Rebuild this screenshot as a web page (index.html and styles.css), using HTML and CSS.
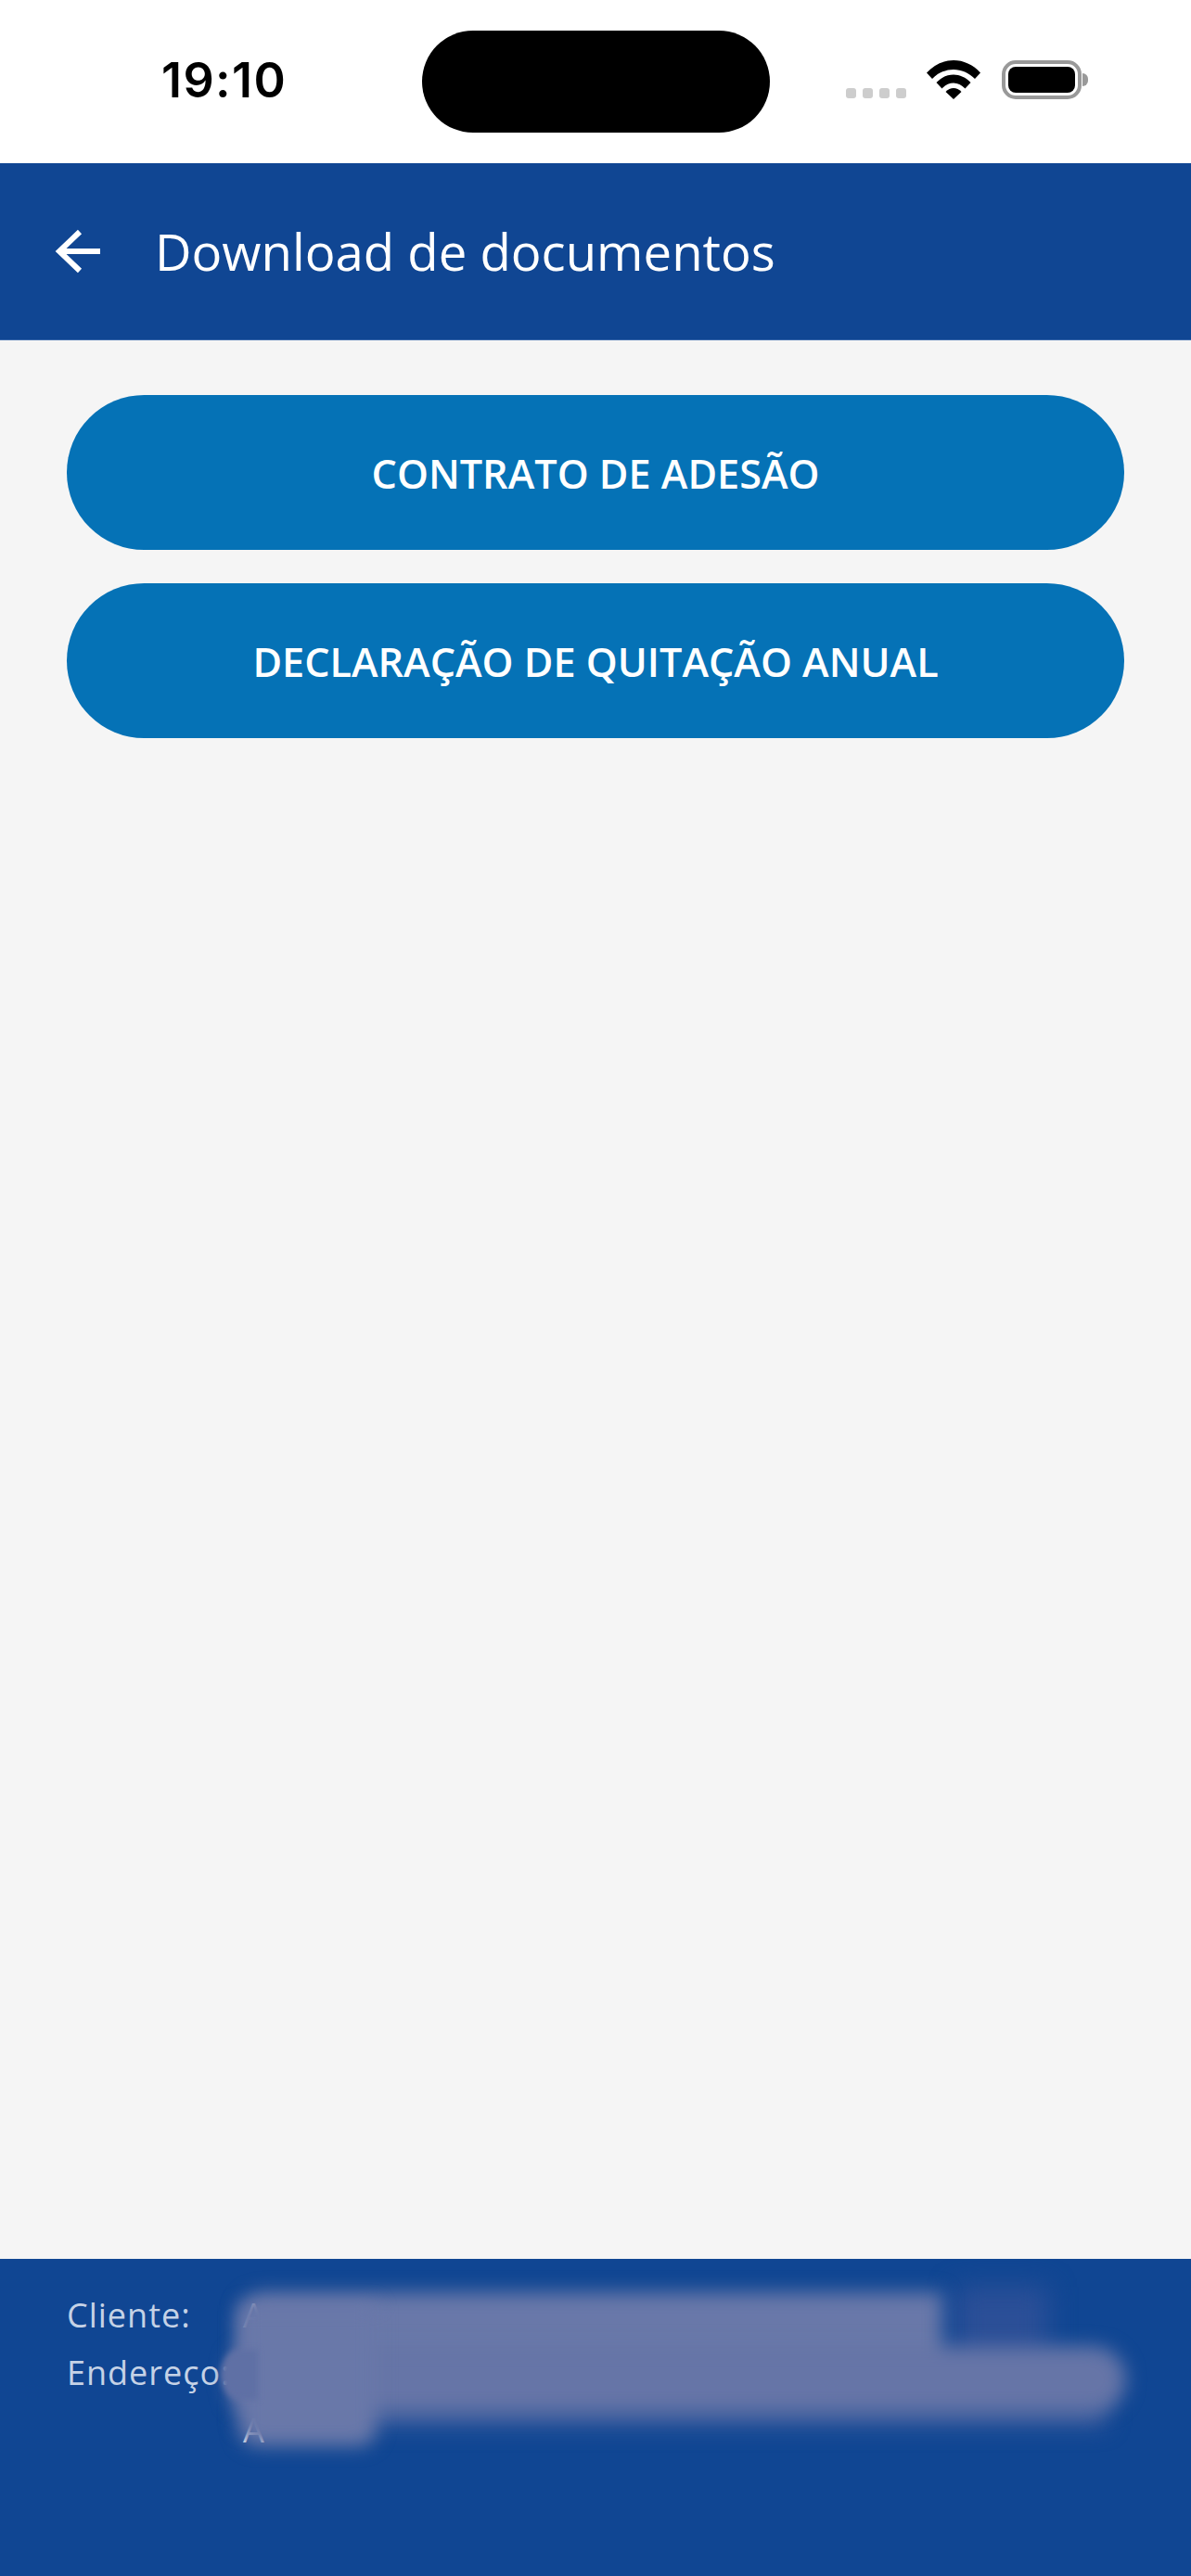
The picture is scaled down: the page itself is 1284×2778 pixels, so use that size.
FILE: index.html
```html
<!DOCTYPE html>
<html lang="pt-BR">
<head>
  <meta charset="UTF-8">
  <meta name="viewport" content="width=device-width, initial-scale=1.0">
  <title>Download de documentos</title>
  <link rel="stylesheet" href="styles.css">
</head>
<body>

  <div class="status-bar">
    <span class="clock">19:10</span>
    <div class="island"></div>
    <div class="status-icons">
      <div class="signal"><i></i><i></i><i></i><i></i></div>
      <svg class="wifi" width="58" height="42" viewBox="0 0 58 42">
        <path d="M0 13.500C16-4.500 42-4.500 58 13.500L52 20C39 6.500 19 6.500 6 20Z" fill="#000"/>
        <path d="M10.500 24C21 12.500 37 12.500 47.500 24L41.500 30.500C34 22.500 24 22.500 16.500 30.500Z" fill="#000"/>
        <path d="M20.500 34C25.500 28.500 32.500 28.500 37.500 34L29 42Z" fill="#000"/>
      </svg>
      <div class="battery"><div class="battery-fill"></div></div>
      <div class="battery-cap"></div>
    </div>
  </div>

  <header class="app-header">
    <svg class="back-icon" width="50" height="48" viewBox="0 0 50 48">
      <path d="M27 3L5 24L27 45M5 24H49" fill="none" stroke="#fff" stroke-width="6"/>
    </svg>
    <h1>Download de documentos</h1>
  </header>

  <main class="content">
    <button type="button" class="doc-button">CONTRATO DE ADESÃO</button>
    <button type="button" class="doc-button">DECLARAÇÃO DE QUITAÇÃO ANUAL</button>
  </main>

  <footer class="client-info">
    <div class="info-grid">
      <span class="info-label">Cliente:</span><span class="info-value">A</span>
      <span class="info-label">Endereço:</span><span class="info-value"></span>
      <span class="info-label"></span><span class="info-value">A</span>
    </div>
    <div class="redaction">
      <div class="smear smear-corner"></div>
      <div class="smear smear-top"></div>
      <div class="smear smear-shadow"></div>
      <div class="smear smear-middle"></div>
      <div class="smear smear-left"></div>
      <div class="smear smear-tip"></div>
    </div>
  </footer>

</body>
</html>
```

FILE: styles.css
```css
* {
  box-sizing: border-box;
}
html, body {
  height: 100%;
}
body {
  display: flex;
  flex-direction: column;
  margin: 0;
  font-family: "Open Sans", Arial, sans-serif;
  background: #f5f5f5;
  overflow: hidden;
}
.status-bar {
  position: relative;
  height: 176px;
  flex: none;
  background: #fff;
}
.clock {
  position: absolute;
  left: 174px;
  top: 56px;
  font-family: Inter, "Liberation Sans", sans-serif;
  font-size: 52px;
  line-height: 62px;
  font-weight: 600;
  letter-spacing: 1.400px;
  color: #000;
}
.island {
  position: absolute;
  left: 455px;
  top: 33px;
  width: 375px;
  height: 110px;
  background: #000;
  border-radius: 55px;
}
.status-icons {
  position: absolute;
  left: 912px;
  top: 64px;
  display: flex;
  align-items: flex-start;
}
.signal {
  display: flex;
  gap: 7px;
  margin-top: 31px;
}
.signal i {
  width: 11px;
  height: 11px;
  background: #cdcdcd;
  border-radius: 3px;
}
.wifi {
  margin-left: 22px;
  margin-top: 1px;
}
.battery {
  width: 86px;
  height: 42px;
  margin-left: 23px;
  margin-top: 1px;
  padding: 3px;
  border: 4px solid #999;
  border-radius: 15px;
}
.battery-fill {
  height: 100%;
  background: #000;
  border-radius: 8px;
}
.battery-cap {
  width: 6px;
  height: 14px;
  margin-top: 15px;
  margin-left: 1px;
  background: #999;
  border-radius: 0 6px 6px 0;
}
.app-header {
  display: flex;
  align-items: center;
  height: 191px;
  flex: none;
  padding: 0 0 0 59px;
  background: #104693;
  border-bottom: 1px solid #3a68ab;
}
.back-icon {
  flex: none;
  margin-top: -1px;
}
.app-header h1 {
  margin: 0 0 0 58px;
  font-size: 54.500px;
  font-weight: 400;
  color: #fff;
}
.content {
  flex: 1;
  display: flex;
  flex-direction: column;
  gap: 36px;
  padding: 59px 72px 0;
}
.doc-button {
  width: 100%;
  height: 167px;
  padding: 2px 0 0;
  border: none;
  border-radius: 84px;
  background: #0572b6;
  color: #fff;
  font-family: inherit;
  font-size: 43.200px;
  font-weight: 600;
}
.client-info {
  position: relative;
  height: 342px;
  flex: none;
  padding: 36px 72px 0;
  background: #104693;
}
.info-grid {
  display: grid;
  grid-template-columns: 190px 1fr;
  grid-auto-rows: 62px;
  font-size: 36px;
  line-height: 50px;
  letter-spacing: 1px;
}
.info-label {
  color: #c5d2e6;
}
.info-value {
  color: #fff;
}
.redaction {
  position: absolute;
  inset: 0;
  overflow: hidden;
}
.smear {
  position: absolute;
  background: #6978a9;
  filter: blur(10px);
}
.smear-top {
  left: 258px;
  top: 36px;
  width: 758px;
  height: 90px;
  border-radius: 26px 0 0 0;
}
.smear-corner {
  left: 1030px;
  top: 30px;
  width: 100px;
  height: 80px;
  background: #2b4f97;
  filter: blur(14px);
}
.smear-shadow {
  left: 262px;
  top: 152px;
  width: 930px;
  height: 28px;
  background: #3f5e9f;
  filter: blur(12px);
}
.smear-middle {
  left: 246px;
  top: 94px;
  width: 968px;
  height: 72px;
  background: #6675a7;
  border-radius: 30px 40px 40px 30px;
}
.smear-left {
  left: 258px;
  top: 50px;
  width: 148px;
  height: 152px;
  background: #6978a9;
  border-radius: 0 0 20px 20px;
}
.smear-tip {
  left: 238px;
  top: 98px;
  width: 40px;
  height: 54px;
  background: #5f70a5;
  filter: blur(3px);
  border-radius: 50% 0 0 50%;
}
```
